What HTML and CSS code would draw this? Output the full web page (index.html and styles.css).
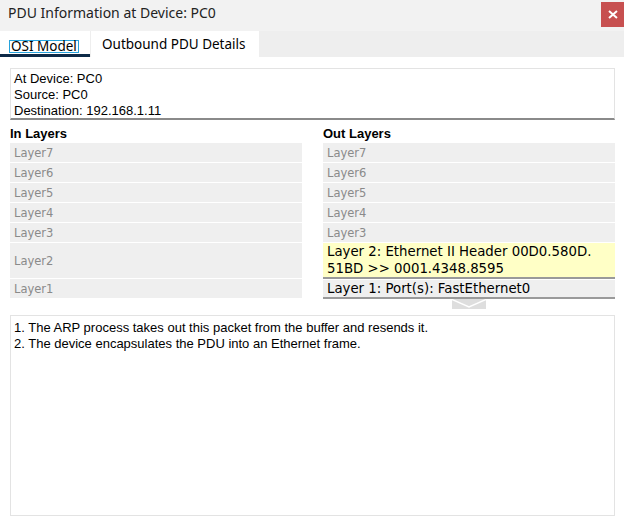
FILE: index.html
```html
<!DOCTYPE html>
<html>
<head>
<meta charset="utf-8">
<link rel="stylesheet" href="styles.css">
</head>
<body>
<div class="window">
  <div class="titlebar">
    <span class="title">PDU Information at Device: PC0</span>
    <div class="close"><svg width="10" height="9" viewBox="0 0 10 9"><path d="M1 1 L9 8 M9 1 L1 8" stroke="#fff" stroke-width="2"/></svg></div>
  </div>
  <div class="tabs">
    <div class="tab active"><span class="focus">OSI Model</span></div>
    <div class="tab second">Outbound PDU Details</div>
  </div>
  <div class="content">
    <div class="info">
      <div>At Device: PC0</div>
      <div>Source: PC0</div>
      <div>Destination: 192.168.1.11</div>
    </div>
    <div class="layers">
      <div class="col">
        <div class="head">In Layers</div>
        <div class="row">Layer7</div>
        <div class="row">Layer6</div>
        <div class="row">Layer5</div>
        <div class="row">Layer4</div>
        <div class="row">Layer3</div>
        <div class="row tall">Layer2</div>
        <div class="row">Layer1</div>
      </div>
      <div class="col">
        <div class="head">Out Layers</div>
        <div class="row">Layer7</div>
        <div class="row">Layer6</div>
        <div class="row">Layer5</div>
        <div class="row">Layer4</div>
        <div class="row">Layer3</div>
        <div class="row tall sel">Layer 2: Ethernet II Header 00D0.580D.<br>51BD &gt;&gt; 0001.4348.8595</div>
        <div class="row act">Layer 1: Port(s): FastEthernet0</div>
        <div class="chev"><svg width="34" height="10" viewBox="0 0 34 10"><rect x="0" y="0" width="34" height="10" fill="#dedede"/><path d="M0 0.5 L17 8 L34 0.5" stroke="#fff" stroke-width="1.5" fill="none"/></svg></div>
      </div>
    </div>
    <div class="desc">
      <div>1. The ARP process takes out this packet from the buffer and resends it.</div>
      <div>2. The device encapsulates the PDU into an Ethernet frame.</div>
    </div>
  </div>
</div>
</body>
</html>
```
FILE: styles.css
```css
html, body {
  margin: 0;
  padding: 0;
  background: #ffffff;
}
.window {
  width: 624px;
  height: 516px;
  overflow: hidden;
  display: flex;
  flex-direction: column;
}
.titlebar {
  height: 31px;
  background: #f2f2f2;
  display: flex;
  align-items: center;
  padding-left: 8px;
  box-sizing: border-box;
}
.title {
  font-family: "Noto Sans", sans-serif;
  font-size: 14px;
  color: #222;
  margin-top: -6px;
}
.close {
  margin-left: auto;
  align-self: flex-start;
  margin-top: 2px;
  width: 23px;
  height: 25px;
  background: #c75050;
  display: flex;
  align-items: center;
  justify-content: center;
}
.tabs {
  height: 26px;
  background: #eeeeee;
  display: flex;
}
.tab {
  background: #ffffff;
  font-family: "Noto Sans", sans-serif;
  font-size: 13.5px;
  color: #000;
  box-sizing: border-box;
}
.tab.active {
  width: 90px;
  border-bottom: 3px solid #0d2a47;
  padding-left: 9px;
  padding-top: 6px;
}
.focus {
  display: inline-block;
  border: 1px solid #27a3dc;
  line-height: 11px;
  padding: 0 1px 0 1px;
}
.tab.second {
  width: 168px;
  margin-left: 1px;
  padding-left: 11px;
  padding-top: 4px;
}
.content {
  padding: 11px 9px 0 10px;
  display: flex;
  flex-direction: column;
  flex: 1;
}
.info {
  border: 1px solid #e3e3e3;
  border-bottom: 2px solid #8a8a8a;
  padding: 2px 3px 1px 3px;
  height: 52px;
  box-sizing: border-box;
  font-family: "Liberation Sans", Arial, sans-serif;
  font-size: 13px;
  line-height: 16px;
  color: #000;
}
.layers {
  display: grid;
  grid-template-columns: 292px 292px;
  column-gap: 21px;
  margin-top: 1px;
}
.col {
  display: flex;
  flex-direction: column;
  gap: 1px;
}
.head {
  font-family: "Liberation Sans", Arial, sans-serif;
  font-weight: bold;
  font-size: 13px;
  height: 21px;
  line-height: 18px;
  padding-top: 4px;
  box-sizing: border-box;
  color: #000;
}
.row {
  background: #efefef;
  font-family: "DejaVu Sans", Verdana, sans-serif;
  font-size: 11.5px;
  color: #8a8a8a;
  height: 19px;
  line-height: 20px;
  padding-left: 4px;
  box-sizing: border-box;
}
.row.tall {
  height: 35px;
  display: flex;
  align-items: center;
  line-height: 18px;
}
.row.sel {
  background: #ffffc6;
  color: #000;
  font-size: 13.3px;
  border-bottom: 2px solid #9a9a9a;
  height: 36px;
  padding-top: 0;
  display: block;
  line-height: 17px;
}
.row.act {
  color: #000;
  font-size: 13.3px;
  border-bottom: 2px solid #9a9a9a;
  height: 19px;
  line-height: 17px;
}
.chev {
  display: flex;
  justify-content: center;
  margin-top: -1px;
  height: 10px;
}
.chev svg {
  display: block;
}
.desc {
  margin-top: 6px;
  flex: 1;
  border: 1px solid #e3e3e3;
  padding: 4px 3px;
  font-family: "Liberation Sans", Arial, sans-serif;
  font-size: 13px;
  line-height: 16px;
  color: #000;
}
```
